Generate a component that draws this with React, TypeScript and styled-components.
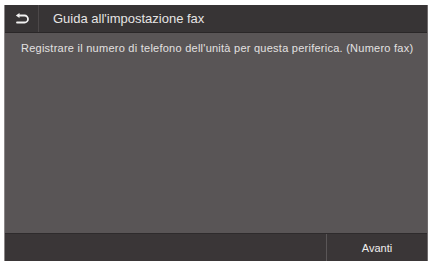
import styled, { createGlobalStyle } from "styled-components";

const GlobalStyle = createGlobalStyle`
  html, body {
    margin: 0;
    padding: 0;
    background: #ffffff;
  }
  body {
    font-family: "Liberation Sans Narrow", "Liberation Sans", Arial, sans-serif;
  }
`;

const BackIcon = () => (
  <svg width="16" height="12" viewBox="0 0 16 12" fill="none">
    <path
      d="M5 2.5 H10.5 A3.5 3.5 0 0 1 10.5 9.5 H3"
      stroke="#f2f2f2"
      strokeWidth="1.8"
      strokeLinecap="round"
    />
    <path d="M5.5 0 L1.8 2.5 L5.5 5 Z" fill="#f2f2f2" />
  </svg>
);

const App = () => {
  return (
    <>
      <GlobalStyle />
      <Page>
        <Screen>
          <Header>
            <BackButton aria-label="Indietro">
              <BackIcon />
            </BackButton>
            <Title>Guida all'impostazione fax</Title>
          </Header>
          <Content>
            <Message>
              Registrare il numero di telefono dell'unità per questa periferica. (Numero fax)
            </Message>
          </Content>
          <Footer>
            <FooterSpace />
            <FooterButton>Avanti</FooterButton>
          </Footer>
        </Screen>
      </Page>
    </>
  );
};

const Page = styled.div`
  width: 432px;
  height: 264px;
  padding: 5px 4px 3px 4px;
  box-sizing: border-box;
  display: flex;
`;

const Screen = styled.div`
  flex: 1;
  display: flex;
  flex-direction: column;
  background: #595556;
  border-left: 1px solid #8a8687;
  border-right: 1px solid #6e6a6b;
  overflow: hidden;
`;

const Header = styled.header`
  display: flex;
  height: 27px;
  background: #373435;
  border-bottom: 1px solid #2a2728;
  align-items: stretch;
`;

const BackButton = styled.button`
  width: 34px;
  border: none;
  border-right: 1px solid #4c4849;
  background: transparent;
  display: flex;
  align-items: center;
  justify-content: center;
  padding: 0;
`;

const Title = styled.h1`
  margin: 0;
  padding-left: 14px;
  display: flex;
  align-items: center;
  font-size: 13px;
  font-weight: normal;
  color: #e6e4e4;
`;

const Content = styled.main`
  flex: 1;
  padding: 9px 0 0 16px;
`;

const Message = styled.p`
  margin: 0;
  font-size: 11px;
  letter-spacing: 0.25px;
  color: #e3e1e1;
`;

const Footer = styled.footer`
  display: flex;
  height: 27px;
  background: #3a3637;
  border-top: 1px solid #2e2b2c;
`;

const FooterSpace = styled.div`
  flex: 1;
`;

const FooterButton = styled.button`
  width: 101px;
  border: none;
  border-left: 1px solid #5a5657;
  background: transparent;
  color: #f0eeee;
  font-family: inherit;
  font-size: 11px;
  padding: 0;
`;

export default App;
